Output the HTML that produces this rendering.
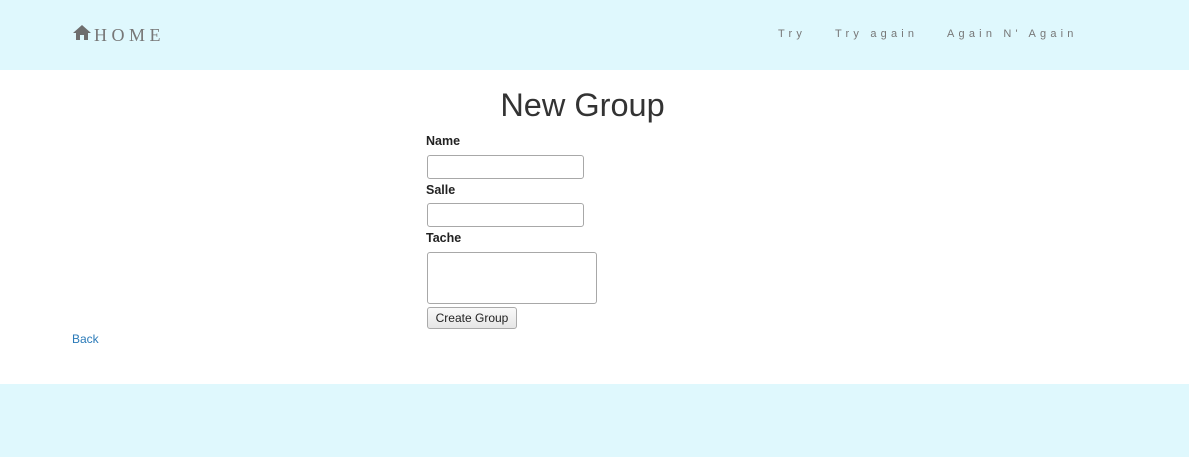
<!DOCTYPE html>
<html><head><meta charset="utf-8"><style>
*{box-sizing:border-box}
body{margin:0;width:1189px;height:457px;background:#fff;font-family:"Liberation Sans",sans-serif;color:#333;position:relative;overflow:hidden}
.hdr{position:absolute;left:0;top:0;width:1189px;height:70px;background:#dff8fd}
.logo{position:absolute;left:72px;top:24px;display:flex;align-items:flex-start}
.logo span{font-family:"Liberation Serif",serif;font-size:18px;letter-spacing:4.5px;color:#777;margin-left:2px;margin-top:1px}
.nav{position:absolute;top:28px;font-size:11px;letter-spacing:4.2px;color:#777}
h1{position:absolute;left:0;width:1165px;text-align:center;top:87px;margin:0;font-weight:normal;font-size:32.5px;color:#333}
label{position:absolute;left:426px;font-weight:bold;font-size:12.5px;color:#222}
.in{position:absolute;left:427px;width:157px;height:24px;border:1px solid #a8a8a8;border-radius:3px;background:#fff}
.ta{position:absolute;left:427px;top:252px;width:170px;height:52px;border:1px solid #a8a8a8;border-radius:3px;background:#fff}
.btn{position:absolute;left:427px;top:307px;width:90px;height:22px;border:1px solid #aaa;border-radius:3px;background:linear-gradient(#fafafa,#e6e6e6);font-size:12px;text-align:center;line-height:20px;color:#222}
.back{position:absolute;left:72px;top:332px;font-size:12px;color:#2a7ab8}
.ftr{position:absolute;left:0;top:384px;width:1189px;height:73px;background:#dff8fd}
</style></head><body>
<div class="hdr">
<div class="logo"><svg width="20" height="17" viewBox="0 0 20 17"><path d="M10 1 L1 9 H4 V16 H8 V11 H12 V16 H16 V9 H19 Z" fill="#6e6e6e"/></svg><span>HOME</span></div>
<div class="nav" style="left:778px">Try</div>
<div class="nav" style="left:835px">Try again</div>
<div class="nav" style="left:947px">Again N' Again</div>
</div>
<h1>New Group</h1>
<label style="top:134px">Name</label>
<div class="in" style="top:155px"></div>
<label style="top:183px">Salle</label>
<div class="in" style="top:203px"></div>
<label style="top:231px">Tache</label>
<div class="ta"></div>
<div class="btn">Create Group</div>
<div class="back">Back</div>
<div class="ftr"></div>
</body></html>
